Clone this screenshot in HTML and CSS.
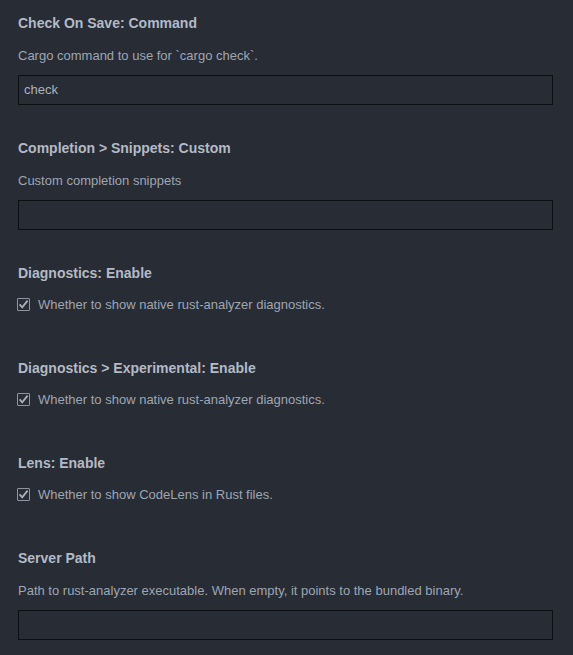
FILE: index.html
```html
<!DOCTYPE html>
<html>
<head>
<meta charset="utf-8">
<link rel="stylesheet" href="styles.css">
</head>
<body>
<div class="settings">
  <section class="setting">
    <h3 class="title">Check On Save: Command</h3>
    <p class="desc">Cargo command to use for `cargo check`.</p>
    <div class="field">check</div>
  </section>
  <section class="setting">
    <h3 class="title">Completion &gt; Snippets: Custom</h3>
    <p class="desc">Custom completion snippets</p>
    <div class="field"></div>
  </section>
  <section class="setting check-setting">
    <h3 class="title">Diagnostics: Enable</h3>
    <label class="check-row"><span class="box"><svg viewBox="0 0 13 13" width="13" height="13"><path d="M2.6 6.4 L5.2 9.3 L10.6 2.6" fill="none" stroke="#aab1bc" stroke-width="1.8"/></svg></span>Whether to show native rust-analyzer diagnostics.</label>
  </section>
  <section class="setting check-setting">
    <h3 class="title">Diagnostics &gt; Experimental: Enable</h3>
    <label class="check-row"><span class="box"><svg viewBox="0 0 13 13" width="13" height="13"><path d="M2.6 6.4 L5.2 9.3 L10.6 2.6" fill="none" stroke="#aab1bc" stroke-width="1.8"/></svg></span>Whether to show native rust-analyzer diagnostics.</label>
  </section>
  <section class="setting check-setting">
    <h3 class="title">Lens: Enable</h3>
    <label class="check-row"><span class="box"><svg viewBox="0 0 13 13" width="13" height="13"><path d="M2.6 6.4 L5.2 9.3 L10.6 2.6" fill="none" stroke="#aab1bc" stroke-width="1.8"/></svg></span>Whether to show CodeLens in Rust files.</label>
  </section>
  <section class="setting">
    <h3 class="title">Server Path</h3>
    <p class="desc">Path to rust-analyzer executable. When empty, it points to the bundled binary.</p>
    <div class="field"></div>
  </section>
</div>
</body>
</html>
```
FILE: styles.css
```css
html, body {
  margin: 0;
  padding: 0;
  background: #282c34;
}
body {
  font-family: "Liberation Sans", Arial, sans-serif;
  font-size: 13px;
  color: #9ea6b3;
}
.settings {
  padding: 15px 20px 0 18px;
  display: flex;
  flex-direction: column;
}
.setting {
  display: flex;
  flex-direction: column;
  margin-bottom: 35px;
}
.check-setting {
  margin-bottom: 47px;
}
.title {
  margin: 0;
  font-size: 14px;
  line-height: 16px;
  font-weight: bold;
  color: #b3bac6;
}
.desc {
  margin: 17px 0 11px;
  line-height: 16px;
}
.field {
  height: 28px;
  border: 1px solid #0c0e11;
  background: #282c34;
  color: #abb2bf;
  line-height: 28px;
  padding: 0 5px;
}
.check-row {
  margin-top: 16px;
  display: flex;
  align-items: center;
  line-height: 16px;
}
.box {
  width: 13px;
  height: 13px;
  box-sizing: border-box;
  border: 1px solid #8d95a2;
  border-radius: 1px;
  margin: 0 8px 2px -1px;
  display: flex;
  position: relative;
}
.box svg {
  position: absolute;
  left: -1px;
  top: -1px;
}
```
